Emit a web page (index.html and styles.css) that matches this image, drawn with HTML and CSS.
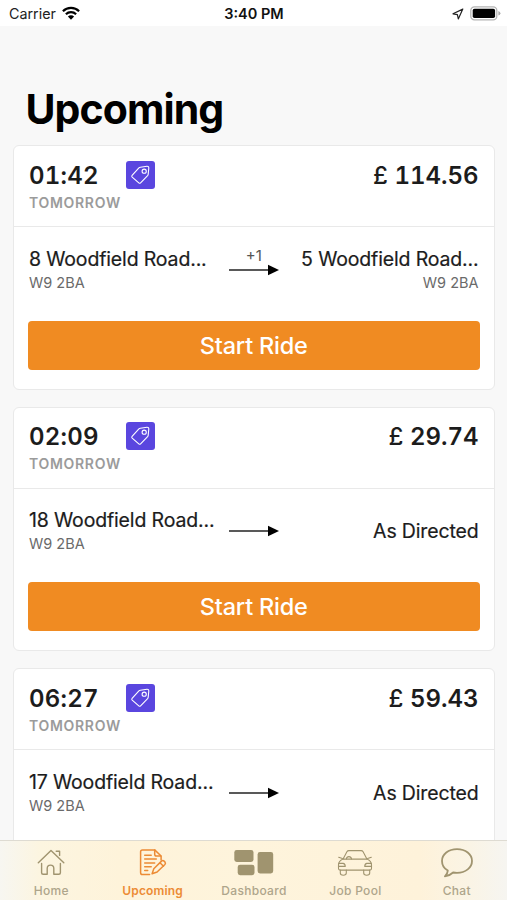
FILE: index.html
```html
<!DOCTYPE html>
<html lang="en">
<head>
<meta charset="utf-8">
<title>Upcoming</title>
<link rel="stylesheet" href="styles.css">
</head>
<body>
<svg class="defs" width="0" height="0">
  <symbol id="tag" viewBox="0 0 28 28"><g fill="none" stroke="#fff" stroke-width="1.1" stroke-linejoin="round"><path d="M14.3 6.2 21 5.3q1.8-.1 1.8 1.7l-.6 6.3q-.1.8-.6 1.4l-7 7.1q-.9.9-1.8 0l-6.6-5.7q-.9-.9-.1-1.8l6.8-7.5q.6-.5 1.4-.6Z"/><circle cx="18.2" cy="10.2" r="2.1"/></g></symbol>
  <symbol id="arrow" viewBox="0 0 50 12"><path d="M0 6h41" stroke="#222" stroke-width="1.5"/><path d="M39 .8 50 6 39 11.2Z" fill="#000"/></symbol>
</svg>
<div class="screen">
  <header class="status">
    <div class="carrier"><span class="carrier-name">Carrier</span>
      <svg class="wifi" width="18" height="14" viewBox="0 0 18 14"><g fill="none" stroke="#000" stroke-width="2.2"><path d="M.9 5.2a11.5 11.5 0 0 1 16.2 0"/><path d="M3.9 8.3a7.2 7.2 0 0 1 10.2 0"/></g><path d="M9 13.7 5.9 10.6a4.4 4.4 0 0 1 6.2 0Z"/></svg>
    </div>
    <div class="clock"><span>3:40 PM</span></div>
    <div class="indicators">
      <svg width="12" height="12" viewBox="0 0 12 12"><path d="M10.8 1.1 1 5.8l4.4.8.9 4.3Z" fill="none" stroke="#222" stroke-width="1.2" stroke-linejoin="round"/></svg>
      <svg width="31" height="15" viewBox="0 0 31 15"><rect x=".8" y=".8" width="26" height="13" rx="3.6" fill="#fff" stroke="#b4b4b4" stroke-width="1.3"/><rect x="2.7" y="2.7" width="22.4" height="9.3" rx="1.8"/><path d="M28.4 5v4.6q2-.7 2-2.3T28.4 5Z" fill="#aaa"/></svg>
    </div>
  </header>
  <main class="content">
    <h1><span>Upcoming</span></h1>
    <article class="card">
      <div class="summary">
        <div class="when"><span class="time">01:42</span><span class="day">TOMORROW</span></div>
        <div class="badge"><svg width="28" height="28"><use href="#tag"/></svg></div>
        <div class="price"><span class="currency">£</span> 114.56</div>
      </div>
      <div class="route">
        <div class="stop from"><span class="street">8 Woodfield Road...</span><span class="postcode">W9 2BA</span></div>
        <div class="way"><span class="extra">+1</span><svg width="50" height="12"><use href="#arrow"/></svg></div>
        <div class="stop to"><span class="street">5 Woodfield Road...</span><span class="postcode">W9 2BA</span></div>
      </div>
      <button class="start">Start Ride</button>
    </article>
    <article class="card">
      <div class="summary">
        <div class="when"><span class="time">02:09</span><span class="day">TOMORROW</span></div>
        <div class="badge"><svg width="28" height="28"><use href="#tag"/></svg></div>
        <div class="price"><span class="currency">£</span> 29.74</div>
      </div>
      <div class="route">
        <div class="stop from"><span class="street">18 Woodfield Road...</span><span class="postcode">W9 2BA</span></div>
        <div class="way"><span class="extra"></span><svg width="50" height="12"><use href="#arrow"/></svg></div>
        <div class="stop to directed"><span class="street">As Directed</span></div>
      </div>
      <button class="start">Start Ride</button>
    </article>
    <article class="card">
      <div class="summary">
        <div class="when"><span class="time">06:27</span><span class="day">TOMORROW</span></div>
        <div class="badge"><svg width="28" height="28"><use href="#tag"/></svg></div>
        <div class="price"><span class="currency">£</span> 59.43</div>
      </div>
      <div class="route">
        <div class="stop from"><span class="street">17 Woodfield Road...</span><span class="postcode">W9 2BA</span></div>
        <div class="way"><span class="extra"></span><svg width="50" height="12"><use href="#arrow"/></svg></div>
        <div class="stop to directed"><span class="street">As Directed</span></div>
      </div>
    </article>
  </main>
  <nav class="tabs">
    <a class="tab"><svg width="40" height="34" viewBox="0 0 40 34"><g fill="none" stroke="currentColor" stroke-width="1.4" stroke-linejoin="round" stroke-linecap="round"><path d="M7.3 16.7 20 4.4l12.8 12.3"/><path d="M25.2 5.2h3.4v4.2"/><path d="M10.6 17.4v9.3q0 1.5 1.5 1.5h4.1v-5.8a3.3 3.3 0 0 1 6.6 0v5.8h5.1q1.5 0 1.5-1.5v-9.3"/></g></svg><span>Home</span></a>
    <a class="tab active"><svg width="40" height="34" viewBox="0 0 40 34"><g fill="none" stroke="currentColor" stroke-width="1.5" stroke-linejoin="round" stroke-linecap="round"><path d="M16.6 28.5H9.4q-1.8 0-1.8-1.8V5.7q0-1.8 1.8-1.8h12.3l6.4 6.1v4"/><path d="M21.7 4v4.2q0 1.8 1.8 1.8h4.3"/><path d="M11.7 9.3h6.5M11.7 13.1h11.6M11.7 17h10M11.7 20.8h6.5M11.7 24.6h3"/><path d="m20.8 22.8 7.7-7.7q1.3-1.1 2.6 0l.8.8q1.1 1.3 0 2.6L24.1 26l-5 1.8ZM27 16.7l3.5 3.5"/></g></svg><span>Upcoming</span></a>
    <a class="tab"><svg width="40" height="34" viewBox="0 0 40 34"><g fill="currentColor"><rect x=".3" y="4" width="19.2" height="12" rx="2.4"/><rect x="3.7" y="18.7" width="16.8" height="10.5" rx="2.4"/><rect x="23.6" y="6" width="15.6" height="21.5" rx="2.4"/></g></svg><span>Dashboard</span></a>
    <a class="tab"><svg width="40" height="34" viewBox="0 0 40 34"><g fill="none" stroke="currentColor" stroke-width="1.1" stroke-linejoin="round" stroke-linecap="round"><path d="m8.1 13.1 3.8-7.3q.7-1.2 2-1.2h12.2q1.3 0 2 1.2l3.8 7.3Z"/><path d="m7.4 12.6-3.7-1.4M32.6 12.6l3.7-1.4"/><path d="M8 13.1q-4.5 2.1-4.5 5.8v3.6q0 1.6 1.6 1.6h29.8q1.6 0 1.6-1.6v-3.6q0-3.7-4.5-5.8"/><path d="M3.7 17.4h4.4q2 .3 2.2 3H3.7M36.3 17.4h-4.4q-2 .3-2.2 3h6.6"/><path d="M5.3 24.1v3q0 2.2 3 2.2t3-2.2v-3M28.7 24.1v3q0 2.2 3 2.2t3-2.2v-3"/><path d="M11.4 13q.3-2.4 2.5-2.4t2.6 2.4"/></g></svg><span>Job Pool</span></a>
    <a class="tab"><svg width="40" height="34" viewBox="0 0 40 34"><path d="M20 3.1c8.6 0 15 5.1 15 11.8s-6.4 11.9-15 11.9q-2 0-3.9-.3-3.6 3.4-8.2 3.8 2.7-2.5 2.9-5.7Q5 21.1 5 14.9C5 8.2 11.4 3.1 20 3.1Z" fill="none" stroke="currentColor" stroke-width="1.8" stroke-linejoin="round"/></svg><span>Chat</span></a>
  </nav>
</div>
</body>
</html>
```
FILE: styles.css
```css
* { box-sizing: border-box; }
body {
  margin: 0;
  font-family: Inter, "Liberation Sans", sans-serif;
  color: #1c1c1c;
  background: #f8f8f8;
}
.defs { display: none; }
.screen {
  display: flex;
  flex-direction: column;
  width: 507px;
  height: 900px;
  overflow: hidden;
}
.status {
  display: grid;
  grid-template-columns: 1fr auto 1fr;
  align-items: center;
  flex: none;
  height: 26px;
  padding: 1px 6px 0 9px;
  background: #fff;
}
.carrier, .indicators { display: flex; align-items: center; }
.carrier { gap: 6px; font-size: 14.3px; color: #222; }
.wifi { margin-top: -2px; }
.clock { margin-left: -2px; font-size: 14.5px; font-weight: 600; color: #111; }
.indicators { justify-content: flex-end; gap: 6px; }
.content {
  flex: 1;
  min-height: 0;
  overflow: hidden;
  padding: 0 12.5px 0 13px;
}
h1 {
  margin: 0;
  height: 119px;
  padding: 58px 0 0 12.5px;
  font-size: 41px;
  line-height: 50px;
  font-weight: 700;
  letter-spacing: -0.9px;
  color: #000;
}
.card {
  height: 244.5px;
  margin-bottom: 17px;
  border: 1.5px solid #e9e9e9;
  border-radius: 6px;
  background: #fff;
}
.summary {
  display: flex;
  height: 81px;
  padding: 14.7px 15px 0;
  border-bottom: 1.5px solid #e9e9e9;
}
.when { display: flex; flex-direction: column; width: 97px; }
.time, .price {
  font-size: 24px;
  line-height: 29px;
  font-weight: 600;
  font-variant-numeric: tabular-nums;
}
.time { letter-spacing: 0.25px; }
.currency { font-weight: 500; }
.day {
  margin-top: 4px;
  font-size: 14px;
  line-height: 18px;
  font-weight: 600;
  letter-spacing: 0.7px;
  color: #9b9b9b;
}
.badge {
  width: 29px;
  height: 28px;
  border-radius: 3px;
  background: #5a46df;
}
.badge svg { display: block; }
.price { margin-left: auto; }
.route {
  display: flex;
  justify-content: space-between;
  height: 93.7px;
  padding: 19.7px 15px 0;
}
.stop { display: flex; flex-direction: column; width: 190px; white-space: nowrap; }
.to { align-items: flex-end; text-align: right; }
.directed { padding-top: 11px; }
.street { font-size: 19.5px; line-height: 24px; letter-spacing: -0.15px; -webkit-text-stroke: 0.2px #1c1c1c; }
.postcode {
  margin-top: 3px;
  font-size: 14.5px;
  line-height: 18px;
  color: #6a6a6a;
}
.way { display: flex; flex-direction: column; align-items: center; width: 50px; }
.extra {
  height: 17px;
  font-size: 15px;
  line-height: 17px;
  color: #555;
}
.start {
  display: block;
  width: 452px;
  height: 49px;
  margin: 0 auto;
  padding: 0;
  border: 0;
  border-radius: 4px;
  background: #f08b22;
  color: #fff;
  font: 500 23.5px/49px Inter, "Liberation Sans", sans-serif;
  letter-spacing: -0.2px;
}
.tabs {
  display: grid;
  grid-template-columns: repeat(5, 1fr);
  flex: none;
  height: 60px;
  border-top: 1px solid #dedbd2;
  background: linear-gradient(90deg, #f7f6f1 0, #fcf5e0 40px, #fef3da 120px, #fef4dc 250px, #fef2da 420px, #faf4e5 470px, #f6f5f1 507px);
}
.tab {
  display: flex;
  flex-direction: column;
  align-items: center;
  padding: 5px 0 0 1px;
  font-size: 12px;
  line-height: 15px;
  font-weight: 500;
  letter-spacing: 0.3px;
  color: #a0946f;
}
.tab span { margin-top: 3px; color: #aea58b; }
.tab svg { display: block; }
.active, .active span { color: #ec8b35; }
.active span { font-weight: 600; letter-spacing: 0.15px; }
```
